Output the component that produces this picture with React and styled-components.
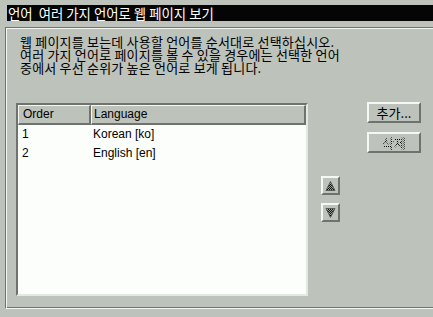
import styled, { createGlobalStyle } from "styled-components";

const GlobalStyle = createGlobalStyle`
  html, body {
    margin: 0;
    padding: 0;
    background: #bdc2bb;
  }
  body {
    width: 433px;
    height: 317px;
    overflow: hidden;
    font-family: "Noto Sans CJK KR", "Liberation Sans", sans-serif;
    font-size: 12px;
    color: #000;
  }
`;

const Page = styled.div`
  padding-top: 5px;
  height: 312px;
  overflow: hidden;
`;

const TitleBar = styled.div`
  margin-left: 7px;
  height: 16px;
  background: #050505;
  color: #fff;
  font-size: 13.4px;
  line-height: 16px;
  padding-left: 1px;
  white-space: pre;
`;

const Frame = styled.div`
  margin: 6px 0 0 5px;
  height: 273px;
  border-top: 1px solid #6e736d;
  border-left: 1px solid #6e736d;
  border-bottom: 1px solid #f4f7f3;
  box-shadow: inset 1px 1px 0 #f4f7f3, inset 0 -1px 0 #6e736d;
  padding: 7px 0 0 1px;
`;

const Intro = styled.p`
  margin: 0 0 0 13px;
  line-height: 13px;
  font-size: 13px;
  letter-spacing: 0.2px;
  white-space: pre;
`;

const Body = styled.div`
  display: flex;
  margin: 29px 0 0 9px;
`;

const ListBox = styled.div`
  width: 288px;
  height: 189px;
  border: 2px solid;
  border-color: #6e736d #e4e8e3 #e4e8e3 #6e736d;
  background: #fbfefa;
  display: flex;
  flex-direction: column;
`;

const Columns = styled.div`
  display: grid;
  grid-template-columns: 73px 1fr;
`;

const HeaderCell = styled.div`
  height: 17px;
  background: #bdc2bb;
  border: 1px solid;
  border-width: 1px 2px 2px 1px;
  border-color: #f4f7f3 #6e736d #6e736d #f4f7f3;
  padding-left: ${(p) => p.$pad}px;
  font-family: "Liberation Sans", sans-serif;
  font-size: 12px;
  line-height: 17px;
`;

const Row = styled(Columns)`
  height: 19px;
  font-family: "Liberation Sans", sans-serif;
  font-size: 12px;
  line-height: 19px;
  &:first-of-type {
    margin-top: 1px;
  }
`;

const Cell = styled.div`
  padding-left: ${(p) => p.$pad}px;
`;

const ArrowColumn = styled.div`
  display: flex;
  flex-direction: column;
  gap: 8px;
  margin: 73px 0 0 13px;
`;

const ArrowButton = styled.div`
  width: 15px;
  height: 15px;
  border: 2px solid;
  border-color: #f4f7f3 #6e736d #6e736d #f4f7f3;
  display: flex;
  align-items: center;
  justify-content: center;
`;

const ButtonColumn = styled.div`
  display: flex;
  flex-direction: column;
  gap: 9px;
  margin: -1px 0 0 27px;
`;

const Button = styled.div`
  width: 50px;
  height: 17px;
  border: 2px solid;
  border-color: #f4f7f3 #6e736d #6e736d #f4f7f3;
  text-align: center;
  font-size: 13px;
  line-height: 17px;
`;

const Disabled = styled.span`
  color: transparent;
  background: repeating-conic-gradient(#000 0 25%, transparent 0 50%) 0 0 / 2px 2px;
  -webkit-background-clip: text;
  background-clip: text;
`;

const Arrow = ({ down }) => (
  <svg width="13" height="12" viewBox="0 0 13 12">
    <defs>
      <pattern id={down ? "chkD" : "chkU"} width="2" height="2" patternUnits="userSpaceOnUse">
        <rect width="2" height="2" fill="#9a9f99" />
        <rect width="1" height="1" fill="#111" />
        <rect x="1" y="1" width="1" height="1" fill="#111" />
      </pattern>
    </defs>
    <polygon
      points={down ? "2,1.5 11,1.5 6.5,10.5" : "6.5,1.5 11,10.5 2,10.5"}
      fill={`url(#${down ? "chkD" : "chkU"})`}
      stroke="#5a5e59"
      strokeWidth="1"
    />
  </svg>
);

const languages = [
  { order: 1, name: "Korean [ko]" },
  { order: 2, name: "English [en]" },
];

export default function App() {
  return (
    <Page>
      <GlobalStyle />
      <TitleBar>{"언어  여러 가지 언어로 웹 페이지 보기"}</TitleBar>
      <Frame>
        <Intro>
          {"웹 페이지를 보는데 사용할 언어를 순서대로 선택하십시오.\n여러 가지 언어로 페이지를 볼 수 있을 경우에는 선택한 언어\n중에서 우선 순위가 높은 언어로 보게 됩니다."}
        </Intro>
        <Body>
          <ListBox>
            <Columns>
              <HeaderCell $pad={4}>Order</HeaderCell>
              <HeaderCell $pad={2}>Language</HeaderCell>
            </Columns>
            {languages.map((l) => (
              <Row key={l.order}>
                <Cell $pad={4}>{l.order}</Cell>
                <Cell $pad={2}>{l.name}</Cell>
              </Row>
            ))}
          </ListBox>
          <ArrowColumn>
            <ArrowButton>
              <Arrow />
            </ArrowButton>
            <ArrowButton>
              <Arrow down />
            </ArrowButton>
          </ArrowColumn>
          <ButtonColumn>
            <Button>추가...</Button>
            <Button>
              <Disabled>삭제</Disabled>
            </Button>
          </ButtonColumn>
        </Body>
      </Frame>
    </Page>
  );
}
